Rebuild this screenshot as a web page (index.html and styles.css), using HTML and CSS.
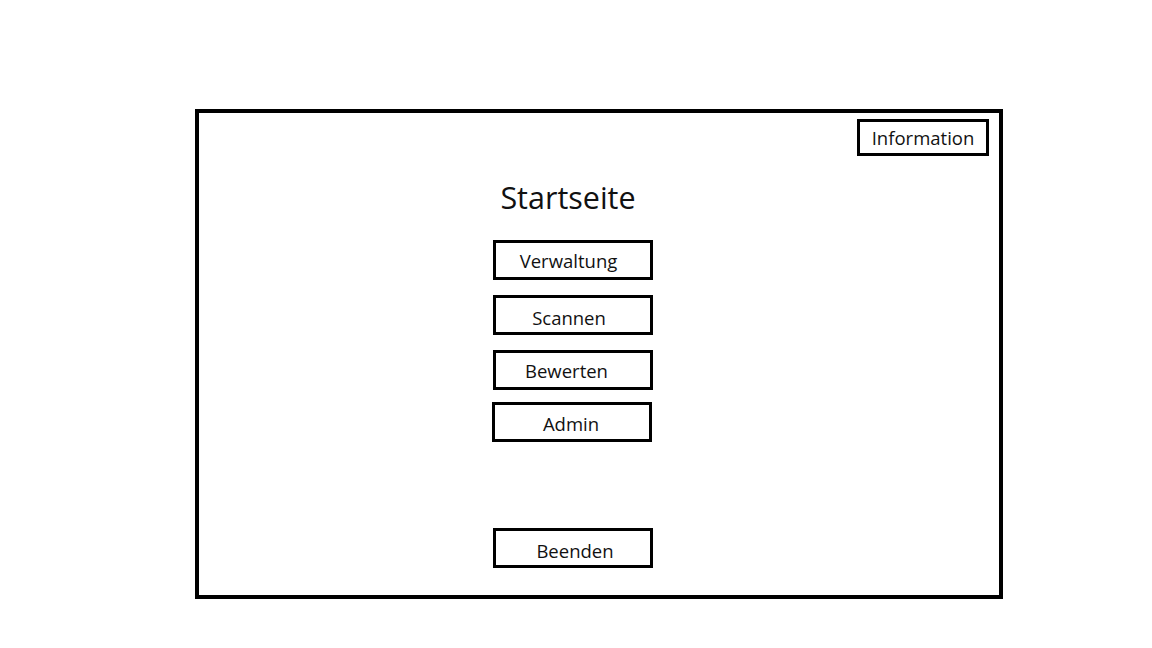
FILE: index.html
```html
<!DOCTYPE html>
<html lang="de">
<head>
<meta charset="utf-8">
<title>Startseite</title>
<link rel="stylesheet" href="styles.css">
</head>
<body>
<div class="page">
  <div class="frame">
    <div class="topbar">
      <div class="btn btn-info">Information</div>
    </div>
    <div class="menu">
      <h1 class="title">Startseite</h1>
      <div class="btn btn-menu shift-verwaltung">Verwaltung</div>
      <div class="btn btn-menu shift-scannen">Scannen</div>
      <div class="btn btn-menu shift-bewerten">Bewerten</div>
      <div class="btn btn-menu btn-admin shift-admin">Admin</div>
      <div class="btn btn-menu btn-quit shift-beenden">Beenden</div>
    </div>
  </div>
</div>
</body>
</html>
```

FILE: styles.css
```css
html, body {
  margin: 0;
  padding: 0;
  background: #ffffff;
}
body {
  font-family: "Open Sans", "Noto Sans", "Liberation Sans", sans-serif;
  color: #111111;
}
.page {
  padding: 109px 0 0 195px;
}
.frame {
  box-sizing: border-box;
  width: 808px;
  height: 490px;
  border: 4px solid #000;
  display: flex;
  flex-direction: column;
}
.topbar {
  display: flex;
  justify-content: flex-end;
  padding: 6px 10px 0 0;
}
.btn {
  box-sizing: border-box;
  border: 3px solid #000;
  display: flex;
  align-items: center;
  justify-content: center;
  background: #fff;
}
.btn-info {
  width: 132px;
  height: 37px;
  font-size: 18.5px;
  padding-bottom: 1px;
}
.menu {
  display: flex;
  flex-direction: column;
  align-items: flex-start;
  margin-left: 294px;
  width: 160px;
}
.title {
  margin: 19px 0 0 0;
  width: 160px;
  text-align: center;
  font-weight: 400;
  font-size: 30.5px;
  line-height: 44px;
  position: relative;
  left: -5px;
}
.btn-menu {
  width: 160px;
  height: 40px;
  font-size: 18.5px;
  margin-top: 15px;
  padding-top: 1px;
}
.menu .title + .btn-menu {
  margin-top: 21px;
}
.btn-admin {
  margin-top: 12px;
  margin-left: -1px;
}
.btn-quit {
  margin-top: 86px;
}
.shift-verwaltung { padding-right: 9px; }
.shift-scannen { padding-right: 8px; padding-top: 4px; }
.shift-bewerten { padding-right: 13px; }
.shift-admin { padding-right: 2px; padding-top: 3px; }
.shift-beenden { padding-left: 4px; padding-top: 4px; }
```
